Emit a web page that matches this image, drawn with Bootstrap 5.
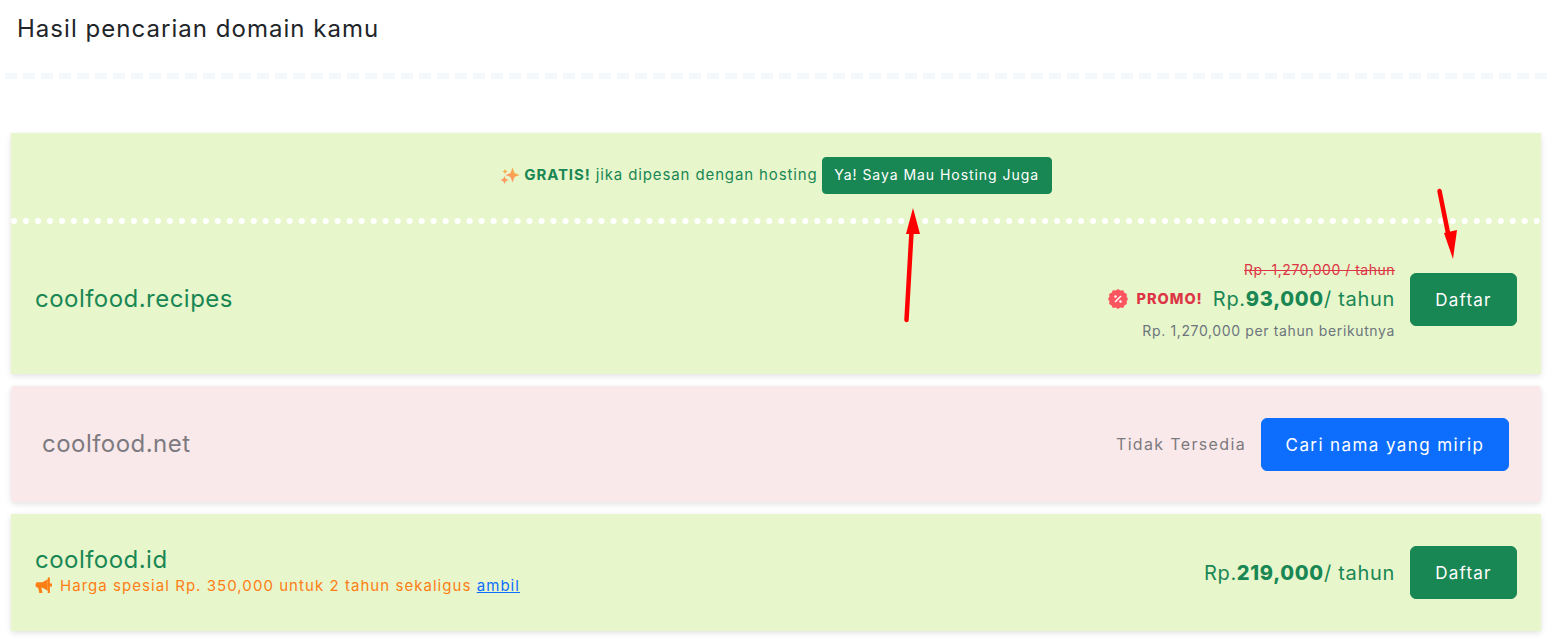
<!DOCTYPE html>
<html lang="id">
<head>
  <meta charset="UTF-8">
  <title>Hasil pencarian domain</title>
  <link href="https://cdn.jsdelivr.net/npm/bootstrap@5.3.3/dist/css/bootstrap.min.css" rel="stylesheet">
  <style>
    body {
      font-family: Inter, "Liberation Sans", sans-serif;
      position: relative;
      height: 644px;
      overflow: hidden;
      background: #fff;
    }
    .page-title {
      font-size: 24px;
      font-weight: 400;
      letter-spacing: 1.03px;
      color: #212529;
      margin: 0;
      padding: 15px 17px 0;
      height: 73px;
    }
    .dash-line {
      margin: 0 5px;
      border-bottom: 6px dashed #f4f8fb;
    }
    .result-list {
      padding: 54px 11px 0;
    }
    .result-box {
      background: #e8f6cb;
      box-shadow: 0 2px 6px rgba(0, 0, 0, .12);
      margin-bottom: 12px;
    }
    .result-box.taken {
      background: #f9e9ea;
      border-radius: 4px;
      height: 116px;
      padding: 0 32px 0 31px;
    }
    .hosting-bar {
      height: 91px;
      padding-top: 24px;
      border-bottom: 6px dotted #fff;
      font-size: 15px;
      letter-spacing: .88px;
      color: #198754;
    }
    .hosting-bar .btn {
      font-size: 14px;
      letter-spacing: .95px;
      height: 37px;
      width: 230px;
      padding: 0;
      line-height: 33px;
      border-radius: 4px;
      margin-left: 4px;
    }
    .result-main { height: 150px; padding: 0 24px; }
    .result-plain { height: 117px; padding: 0 24px; }
    .domain-name {
      font-size: 24px;
      line-height: 28px;
      letter-spacing: .47px;
    }
    .domain-name.muted { color: #7d7a80; }
    .price-col { margin-top: 4px; }
    .action-group { gap: 15px; }
    .result-main .action-group { padding-top: 1px; }
    .old-price { font-size: 14px; line-height: 20px; letter-spacing: .5px; }
    .promo-row { height: 36px; margin-top: 1px; }
    .promo-label { font-size: 14.5px; font-weight: 800; letter-spacing: 1px; margin-right: 10px; }
    .price-now { font-size: 20px; line-height: 30px; letter-spacing: .7px; }
    .price-now b { font-weight: 800; }
    .next-price { font-size: 14px; line-height: 24px; margin-top: 2px; color: #6c757d; letter-spacing: .63px; }
    .daftar-btn {
      width: 107px;
      height: 53px;
      line-height: 52px;
      padding: 0;
      font-size: 17px;
      letter-spacing: 1.2px;
      border-radius: 6px;
    }
    .mirip-btn {
      width: 248px;
      height: 53px;
      line-height: 52px;
      padding: 0;
      font-size: 17px;
      letter-spacing: 1.4px;
      border-radius: 6px;
    }
    .not-avail { font-size: 16px; color: #7d7a80; letter-spacing: 1.35px; }
    .name-block { padding-bottom: 3px; }
    .offer-note { font-size: 15px; line-height: 22px; margin-top: 1px; color: #fd7e14; letter-spacing: 1.05px; }
    .arrow-layer { position: absolute; left: 0; top: 0; pointer-events: none; }
  </style>
</head>
<body>
  <h1 class="page-title">Hasil pencarian domain kamu</h1>
  <div class="dash-line"></div>

  <div class="result-list">
    <div class="result-box">
      <div class="hosting-bar d-flex justify-content-center align-items-start">
        <span class="d-flex align-items-center gap-1" style="height:37px">
          <svg width="20" height="20" viewBox="0 0 20 20">
            <defs><linearGradient id="spark" x1="0" y1="1" x2="1" y2="0"><stop offset="0" stop-color="#fb8a78"/><stop offset="1" stop-color="#fdb52e"/></linearGradient></defs>
            <path fill="url(#spark)" d="M12.500 1.500l2 5.500 5 2-5 2-2 5.500-2-5.500-5-2 5-2z"/>
            <path fill="url(#spark)" d="M4.500 10l1.200 2.800 2.800 1.200-2.800 1.200-1.200 2.800-1.200-2.800L.5 14l2.800-1.200zM5 3l.8 1.700 1.700.8-1.700.8L5 8l-.8-1.700-1.700-.8 1.700-.8z"/>
          </svg>
          <span><b class="fw-bolder">GRATIS!</b> jika dipesan dengan hosting</span>
        </span>
        <a href="#" class="btn btn-success">Ya! Saya Mau Hosting Juga</a>
      </div>
      <div class="result-main d-flex justify-content-between align-items-center">
        <div class="domain-name text-success">coolfood.recipes</div>
        <div class="d-flex align-items-center action-group">
          <div class="text-end price-col">
            <div class="old-price text-danger text-decoration-line-through">Rp. 1,270,000 / tahun</div>
            <div class="promo-row d-flex align-items-center justify-content-end">
              <svg class="me-2" width="20" height="20" viewBox="0 0 20 20">
                <path fill="#fb5560" d="M10 0l2.400 1.500 2.800-.3 1.200 2.500 2.500 1.300-.3 2.800L20 10l-1.400 2.300.3 2.800-2.500 1.300-1.200 2.500-2.800-.3L10 20l-2.400-1.400-2.800.3-1.200-2.500-2.500-1.300.3-2.800L0 10l1.400-2.200-.3-2.800 2.500-1.300 1.200-2.500 2.800.3z"/>
                <path stroke="#fff" stroke-width="1.400" d="M13 7l-6 6"/>
                <circle cx="7.500" cy="7.500" r="1.200" fill="#fff"/><circle cx="12.500" cy="12.500" r="1.200" fill="#fff"/>
              </svg>
              <span class="promo-label text-danger">PROMO!</span>
              <span class="price-now text-success">Rp.<b>93,000</b>/ tahun</span>
            </div>
            <div class="next-price">Rp. 1,270,000 per tahun berikutnya</div>
          </div>
          <a href="#" class="btn btn-success daftar-btn">Daftar</a>
        </div>
      </div>
    </div>

    <div class="result-box taken d-flex justify-content-between align-items-center">
      <div class="domain-name muted">coolfood.net</div>
      <div class="d-flex align-items-center action-group">
        <span class="not-avail">Tidak Tersedia</span>
        <a href="#" class="btn btn-primary mirip-btn">Cari nama yang mirip</a>
      </div>
    </div>

    <div class="result-box result-plain d-flex justify-content-between align-items-center">
      <div class="name-block">
        <div class="domain-name text-success">coolfood.id</div>
        <div class="offer-note d-flex align-items-center gap-2">
          <svg width="17" height="17" viewBox="0 0 16 16">
            <path fill="#fd7e14" d="M12 2L7 5H2.500A2 2 0 0 0 .5 7v1a2 2 0 0 0 2 2H3l1 5h3L6 10h1l5 3z"/>
            <path fill="#fd7e14" d="M12 .5h2v14.500h-2zM14 6h2v3h-2z"/>
          </svg>
          <span>Harga spesial Rp. 350,000 untuk 2 tahun sekaligus <a href="#">ambil</a></span>
        </div>
      </div>
      <div class="d-flex align-items-center action-group">
        <span class="price-now text-success">Rp.<b>219,000</b>/ tahun</span>
        <a href="#" class="btn btn-success daftar-btn">Daftar</a>
      </div>
    </div>
  </div>

  <svg class="arrow-layer" width="1552" height="644" viewBox="0 0 1552 644">
    <path d="M906.500 320L911.500 232" stroke="#f00" stroke-width="4.500" stroke-linecap="round"/>
    <path fill="#f00" d="M913 208l7 26h-14z"/>
    <path d="M1439.500 191L1449 238" stroke="#f00" stroke-width="4.500" stroke-linecap="round"/>
    <path fill="#f00" d="M1453 259l-9-26 13-3z"/>
  </svg>

  <script src="https://cdn.jsdelivr.net/npm/bootstrap@5.3.3/dist/js/bootstrap.bundle.min.js"></script>
</body>
</html>
